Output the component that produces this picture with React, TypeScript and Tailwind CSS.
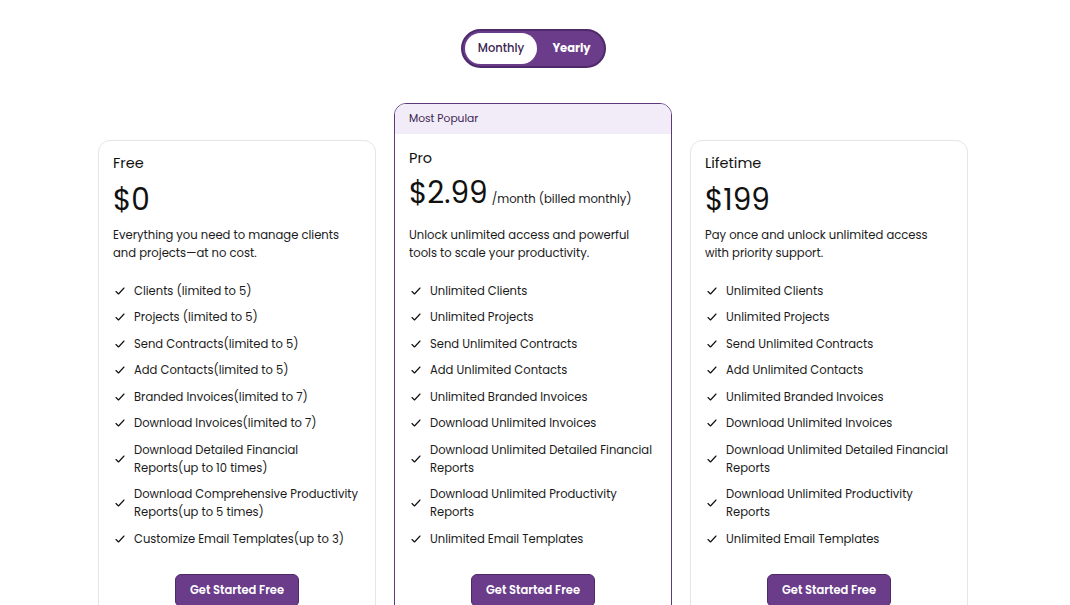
import React from "react";

const Check = () => (
  <svg width="12" height="12" viewBox="0 0 24 24" fill="none" stroke="#111" strokeWidth="2.3" strokeLinecap="round" strokeLinejoin="round" className="shrink-0">
    <path d="M4 13l5 5L20 6" />
  </svg>
);

type Plan = {
  name: string;
  price: string;
  suffix?: string;
  desc: string[];
  features: string[];
  popular?: boolean;
};

const plans: Plan[] = [
  {
    name: "Free",
    price: "$0",
    desc: ["Everything you need to manage clients", "and projects—at no cost."],
    features: [
      "Clients (limited to 5)",
      "Projects (limited to 5)",
      "Send Contracts(limited to 5)",
      "Add Contacts(limited to 5)",
      "Branded Invoices(limited to 7)",
      "Download Invoices(limited to 7)",
      "Download Detailed Financial\nReports(up to 10 times)",
      "Download Comprehensive Productivity\nReports(up to 5 times)",
      "Customize Email Templates(up to 3)",
    ],
  },
  {
    name: "Pro",
    price: "$2.99",
    suffix: "/month (billed monthly)",
    popular: true,
    desc: ["Unlock unlimited access and powerful", "tools to scale your productivity."],
    features: [
      "Unlimited Clients",
      "Unlimited Projects",
      "Send Unlimited Contracts",
      "Add Unlimited Contacts",
      "Unlimited Branded Invoices",
      "Download Unlimited Invoices",
      "Download Unlimited Detailed Financial\nReports",
      "Download Unlimited Productivity\nReports",
      "Unlimited Email Templates",
    ],
  },
  {
    name: "Lifetime",
    price: "$199",
    desc: ["Pay once and unlock unlimited access", "with priority support."],
    features: [
      "Unlimited Clients",
      "Unlimited Projects",
      "Send Unlimited Contracts",
      "Add Unlimited Contacts",
      "Unlimited Branded Invoices",
      "Download Unlimited Invoices",
      "Download Unlimited Detailed Financial\nReports",
      "Download Unlimited Productivity\nReports",
      "Unlimited Email Templates",
    ],
  },
];

function Card({ plan }: { plan: Plan }) {
  const pop = !!plan.popular;
  return (
    <div
      className={
        "w-[278px] rounded-[12px] border bg-white overflow-hidden " +
        (pop ? "border-[#5e3a7c]" : "border-[#e6e6e6] mt-[37px]")
      }
    >
      {pop && (
        <div className="h-[30px] bg-[#f2ecf9] px-[14px] flex items-center text-[10.7px] text-[#3a2450]">
          Most Popular
        </div>
      )}
      <div className={"px-[14px] pb-[22px] " + (pop ? "pt-[13px]" : "pt-[11px]")}>
        <div className="text-[14.5px] leading-[22px] text-[#111]">{plan.name}</div>
        <div className={"flex items-baseline " + (pop ? "mt-[6px]" : "mt-[8px]")}>
          <span className="text-[29.5px] leading-[36px] text-[#111]">{plan.price}</span>
          {plan.suffix && (
            <span className="ml-[4px] text-[11.6px] text-[#1a1a1a]">{plan.suffix}</span>
          )}
        </div>
        <div className={"text-[11.6px] leading-[18px] text-[#1a1a1a] " + (pop ? "mt-[15px]" : "mt-[8px]")}>
          {plan.desc.map((d, i) => (
            <div key={i}>{d}</div>
          ))}
        </div>
        <ul className="mt-[20px] flex flex-col gap-[8.45px]">
          {plan.features.map((f, i) => (
            <li key={i} className="flex items-center gap-[8px] pl-[1px]">
              <Check />
              <span className="text-[11.55px] leading-[18px] text-[#1a1a1a] whitespace-pre-line">{f}</span>
            </li>
          ))}
        </ul>
        <div className="mt-[26px] flex justify-center">
          <button className="h-[33px] w-[124px] rounded-[6px] bg-[#6a3c8a] border border-[#4e2a68] text-white text-[11.5px] font-semibold pt-[2px]">
            Get Started Free
          </button>
        </div>
      </div>
    </div>
  );
}

export default function App() {
  return (
    <div
      className="min-h-[605px] bg-white flex flex-col items-center pt-[29px]"
      style={{ fontFamily: "Poppins, Inter, 'Noto Sans', sans-serif" }}
    >
      <div className="ml-[-3px] h-[39px] w-[145px] rounded-full bg-[#6a3c8a] border-2 border-[#4f2a6b] flex items-center p-[2px]">
        <div className="h-[31px] w-[72px] rounded-full bg-white flex items-center justify-center text-[11.5px] font-medium text-[#3a2450]">
          Monthly
        </div>
        <div className="flex-1 text-center text-[11.5px] font-bold text-white pl-[4px]">Yearly</div>
      </div>
      <div className="mt-[35px] flex items-start gap-[18px] ml-[-4px]">
        {plans.map((p) => (
          <Card key={p.name} plan={p} />
        ))}
      </div>
    </div>
  );
}
